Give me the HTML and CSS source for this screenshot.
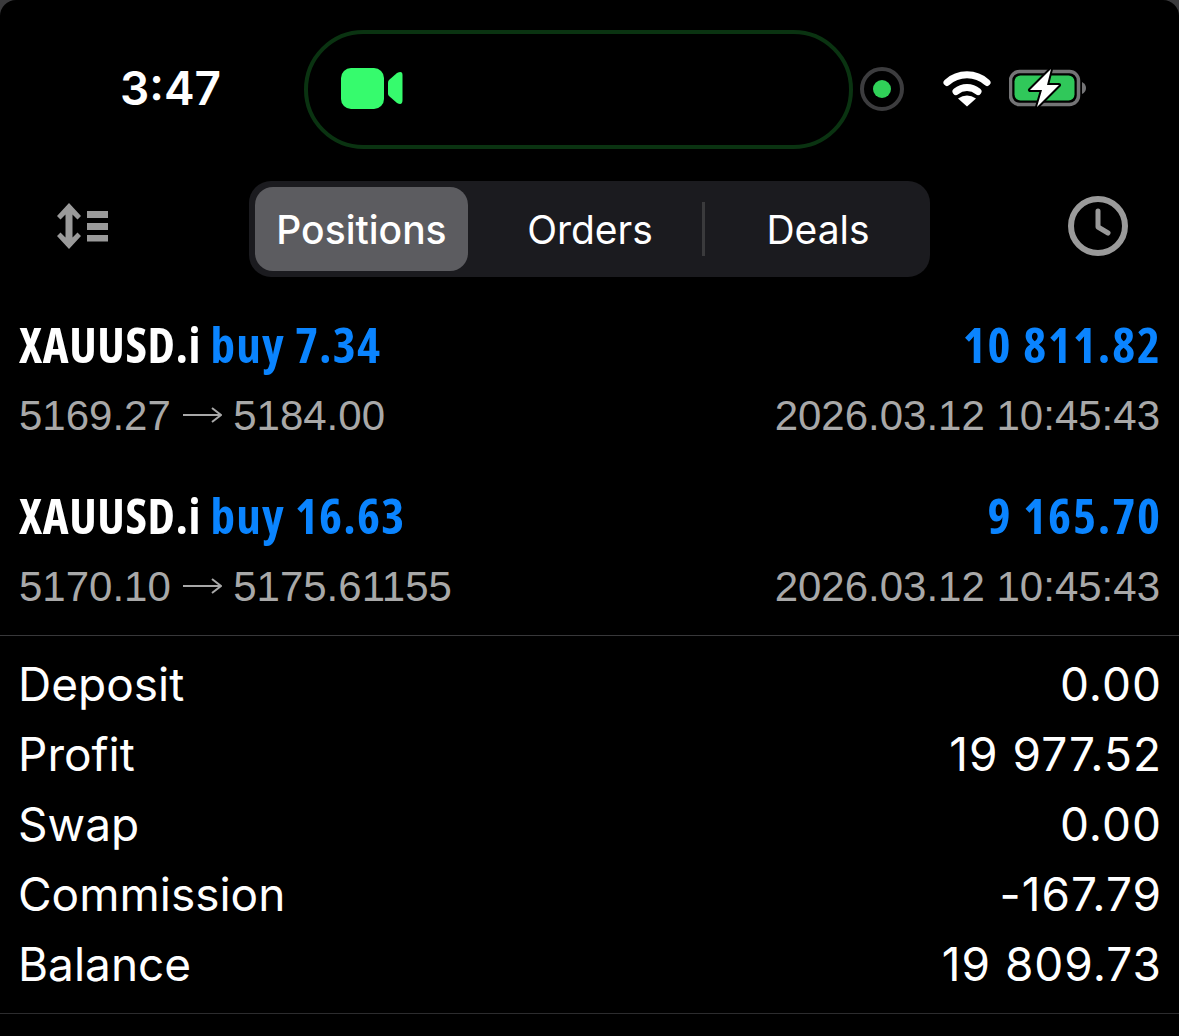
FILE: index.html
```html
<!DOCTYPE html>
<html lang="en">
<head>
    <meta charset="UTF-8">
    <meta name="viewport" content="width=device-width, initial-scale=1.0">
    <title>Positions</title>
    <link rel="stylesheet" href="styles.css">
</head>
<body>
    <div class="screen">
        <div class="status-bar">
            <span class="time">3:47</span>
            <div class="island">
                <svg class="camera" width="62" height="42" viewBox="0 0 62 42">
                    <rect x="0" y="0" width="43" height="41" rx="10" fill="#36fb6d"/>
                    <path d="M47 14.5 Q47 13 48 12 L56 5 Q61.5 2 61.5 7 V32 Q61.5 38 56 35 L48 28 Q47 27 47 25.5 Z" fill="#36fb6d"/>
                </svg>
            </div>
            <div class="record-dot"><span></span></div>
            <svg class="wifi" width="48" height="36" viewBox="0 0 48 36">
                <path d="M4 11.5 A30 30 0 0 1 44 11.5" fill="none" stroke="#fff" stroke-width="7" stroke-linecap="round"/>
                <path d="M13 20.5 A17.5 17.5 0 0 1 35 20.5" fill="none" stroke="#fff" stroke-width="7" stroke-linecap="round"/>
                <path d="M24 35.5 L15 27.5 Q24 21.5 33 27.5 Z" fill="#fff"/>
            </svg>
            <svg class="battery" width="78" height="40" viewBox="0 0 78 40">
                <rect x="1.5" y="3.5" width="68" height="33" rx="9" fill="none" stroke="#747476" stroke-width="3.5"/>
                <rect x="5.5" y="7.5" width="60" height="25" rx="6" fill="#30c85a"/>
                <path d="M73 14 Q77 16 77 20 Q77 24 73 26 Z" fill="#747476"/>
                <path d="M42 1 L21 22 H33 L28 39 L50 17 H38 Z" fill="#fff" stroke="#000" stroke-width="4" stroke-linejoin="round" paint-order="stroke"/>
            </svg>
        </div>

        <div class="toolbar">
            <svg class="sort-icon" width="54" height="46" viewBox="0 0 54 46">
                <path d="M13 0 L25 13 L21.5 16.5 L16.5 11.5 V34.5 L21.5 29.5 L25 33 L13 46 L1 33 L4.5 29.5 L9.5 34.5 V11.5 L4.5 16.5 L1 13 Z" fill="#9a9a9a"/>
                <rect x="31" y="8" width="21" height="7" fill="#9a9a9a"/>
                <rect x="31" y="20" width="21" height="7" fill="#9a9a9a"/>
                <rect x="31" y="32" width="21" height="6.5" fill="#9a9a9a"/>
            </svg>
            <div class="segments">
                <div class="segment active">Positions</div>
                <div class="segment orders">Orders</div>
                <div class="segment deals">Deals</div>
            </div>
            <svg class="clock-icon" width="60" height="60" viewBox="0 0 60 60">
                <circle cx="30" cy="30" r="27" fill="none" stroke="#9a9a9a" stroke-width="6"/>
                <path d="M30 15 V31 L40 37" fill="none" stroke="#9a9a9a" stroke-width="5" stroke-linecap="round" stroke-linejoin="round"/>
            </svg>
        </div>

        <div class="positions">
            <div class="position">
                <div class="line">
                    <div class="title">XAUUSD.i <span class="blue">buy 7.34</span></div>
                    <div class="title blue amount">10 811.82</div>
                </div>
                <div class="line sub">
                    <div>5169.27 <svg class="arrow" width="39" height="18" viewBox="0 0 39 18"><path d="M0 9 H37 M29 2 L38 9 L29 16" fill="none" stroke="#a8a8a8" stroke-width="2"/></svg> 5184.00</div>
                    <div>2026.03.12 10:45:43</div>
                </div>
            </div>
            <div class="position">
                <div class="line">
                    <div class="title">XAUUSD.i <span class="blue">buy 16.63</span></div>
                    <div class="title blue amount">9 165.70</div>
                </div>
                <div class="line sub">
                    <div>5170.10 <svg class="arrow" width="39" height="18" viewBox="0 0 39 18"><path d="M0 9 H37 M29 2 L38 9 L29 16" fill="none" stroke="#a8a8a8" stroke-width="2"/></svg> 5175.61155</div>
                    <div>2026.03.12 10:45:43</div>
                </div>
            </div>
        </div>

        <div class="summary">
            <div class="line row"><span>Deposit</span><span class="num">0.00</span></div>
            <div class="line row"><span>Profit</span><span class="num">19 977.52</span></div>
            <div class="line row"><span>Swap</span><span class="num">0.00</span></div>
            <div class="line row"><span>Commission</span><span class="num">-167.79</span></div>
            <div class="line row"><span>Balance</span><span class="num">19 809.73</span></div>
        </div>
    </div>
</body>
</html>
```

FILE: styles.css
```css
html, body {
    margin: 0;
    height: 100%;
    background: #3a3a3c;
}
.screen {
    height: 1036px;
    overflow: hidden;
    background: black;
    color: white;
    border-radius: 16px 16px 0 0;
    font-family: Inter, "Liberation Sans", sans-serif;
}
.status-bar {
    display: flex;
    align-items: center;
    height: 178px;
    padding-left: 120px;
}
.time {
    width: 184px;
    font-size: 46px;
    font-weight: 600;
    margin-bottom: 2px;
}
.island {
    display: flex;
    align-items: center;
    box-sizing: border-box;
    width: 549px;
    height: 119px;
    padding-left: 33px;
    border: 4px solid #0a3311;
    border-radius: 60px;
}
.record-dot {
    display: flex;
    align-items: center;
    justify-content: center;
    box-sizing: border-box;
    width: 44px;
    height: 44px;
    margin-left: 7px;
    border: 4px solid #3c3c3e;
    border-radius: 50%;
}
.record-dot span {
    width: 18px;
    height: 18px;
    border-radius: 50%;
    background: #30d158;
}
.wifi {
    margin-left: 39px;
}
.battery {
    margin-left: 18px;
    margin-bottom: 2px;
}
.toolbar {
    display: flex;
    align-items: center;
    height: 96px;
    margin-top: 3px;
    padding: 0 51px 0 56px;
}
.sort-icon {
    margin-right: 139px;
    margin-bottom: 6px;
}
.clock-icon {
    margin-bottom: 6px;
}
.segments {
    display: flex;
    box-sizing: border-box;
    width: 681px;
    height: 96px;
    margin-right: 138px;
    padding: 6px;
    background: #1b1b1f;
    border-radius: 22px;
    font-size: 39px;
}
.segment {
    display: flex;
    align-items: center;
    justify-content: center;
}
.active {
    width: 213px;
    background: #5c5c60;
    border-radius: 18px;
    font-weight: 500;
}
.orders {
    width: 236px;
    padding-left: 8px;
    box-sizing: border-box;
}
.deals {
    flex: 1;
    padding-left: 8px;
    position: relative;
}
.deals::before {
    content: "";
    position: absolute;
    left: -2px;
    top: 15px;
    width: 3px;
    height: 54px;
    background: #3a3a3c;
}
.positions {
    padding: 34px 0 13px;
    border-bottom: 1px solid #38383a;
}
.position + .position {
    margin-top: 31px;
}
.line {
    display: flex;
    justify-content: space-between;
    padding: 0 19px;
}
.title {
    font-family: "Open Sans", "Liberation Sans", sans-serif;
    font-stretch: 75%;
    font-size: 49px;
    font-weight: 700;
    letter-spacing: 0.6px;
    line-height: 66px;
    padding-bottom: 4px;
}
.blue {
    color: #0a84ff;
    letter-spacing: 1.2px;
}
.amount {
    letter-spacing: 1.9px;
    margin-right: -2px;
}
.sub {
    font-family: "Liberation Sans", sans-serif;
    font-size: 42px;
    line-height: 70px;
    color: #a8a8a8;
}
.arrow {
    vertical-align: 6px;
}
.summary {
    height: 378px;
    padding-top: 13px;
    box-sizing: border-box;
    border-bottom: 1px solid #2c2c2e;
}
.row {
    height: 70px;
    align-items: center;
    font-size: 46px;
    padding-left: 18px;
}
.num {
    letter-spacing: 1px;
    margin-right: -2px;
}
```
